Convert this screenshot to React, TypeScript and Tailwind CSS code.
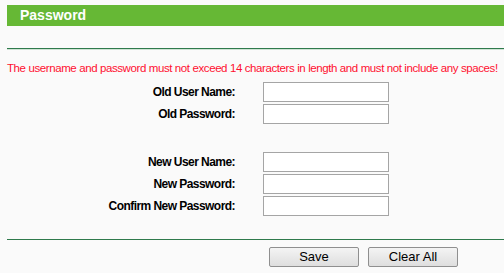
import { useState } from "react";

const Row = ({ label, type }: { label: string; type: string }) => {
  const [value, setValue] = useState("");
  return (
    <div className="flex h-[22px] items-center">
      <span className="w-[228px] text-right text-[12px] font-bold tracking-[-0.55px] text-black">
        {label}
      </span>
      <input
        type={type}
        value={value}
        onChange={(e) => setValue(e.target.value)}
        className="ml-[28px] h-[20px] w-[126px] border border-[#a5a5a5] bg-white px-1 text-[12px] outline-none"
      />
    </div>
  );
};

const App = () => {
  return (
    <div
      className="h-[273px] w-[504px] overflow-hidden bg-[#fafafa] pl-[7px] pt-[5px]"
      style={{ fontFamily: '"Liberation Sans", Arial, sans-serif' }}
    >
      <div className="h-[21px] bg-[#66b835] pl-[13px] text-[14px] font-bold leading-[21px] text-white">
        Password
      </div>

      <div className="mt-[22px] h-[2px] border-t border-b border-[#2f7a4c] border-b-[#cfe3d5]" />

      <p className="mt-[11px] whitespace-nowrap text-[11.5px] leading-[14px] tracking-[-0.4px] text-[#ff1030]">
        The username and password must not exceed 14 characters in length and must not include any spaces!
      </p>

      <div className="mt-[6px] flex flex-col">
        <Row label="Old User Name:" type="text" />
        <Row label="Old Password:" type="password" />
        <div className="h-[26px]" />
        <Row label="New User Name:" type="text" />
        <Row label="New Password:" type="password" />
        <Row label="Confirm New Password:" type="password" />
      </div>

      <div className="mt-[22px] h-[1px] bg-[#2f7a4c]" />

      <div className="mt-[7px] flex gap-[9px] pl-[262px]">
        <button className="h-[20px] w-[90px] rounded-[2px] border border-[#8f8f8f] bg-gradient-to-b from-[#f4f4f4] to-[#dedede] text-[13px] leading-[18px] text-black">
          Save
        </button>
        <button className="h-[20px] w-[90px] rounded-[2px] border border-[#8f8f8f] bg-gradient-to-b from-[#f4f4f4] to-[#dedede] text-[13px] leading-[18px] text-black">
          Clear All
        </button>
      </div>
    </div>
  );
};

export default App;
